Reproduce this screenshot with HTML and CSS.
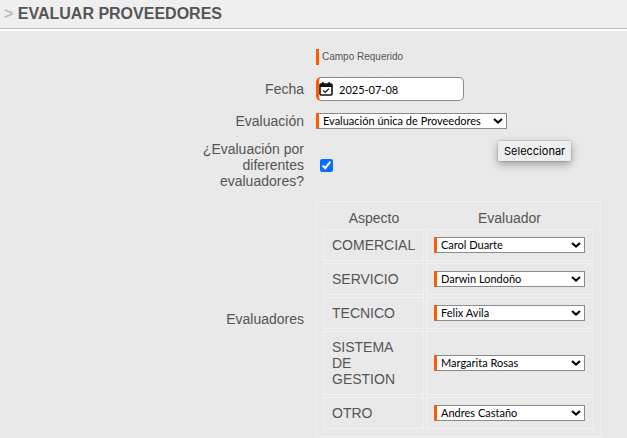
FILE: index.html
```html
<!DOCTYPE html>
<html lang="es">
<head>
  <meta charset="utf-8">
  <title>Evaluar proveedores</title>
  <link rel="stylesheet" href="styles.css">
</head>
<body>
  <header class="header">
    <h1><span class="marker">&gt;</span> EVALUAR PROVEEDORES</h1>
  </header>

  <form class="form">
    <p class="note">Campo Requerido</p>

    <label class="label" for="fecha">Fecha</label>
    <div class="date required">
      <svg class="calendar" viewBox="0 0 14 14" aria-hidden="true">
        <path d="M2 2h10a1 1 0 0 1 1 1v9a1 1 0 0 1-1 1H2a1 1 0 0 1-1-1V3a1 1 0 0 1 1-1z" fill="none" stroke="#111" stroke-width="1.6"/>
        <path d="M1 2h12v3H1zM3 0h1.6v3H3zM9.4 0H11v3H9.4z" fill="#111"/>
        <path d="M4.3 8.4l1.9 1.9 3.8-3.7" fill="none" stroke="#111" stroke-width="1.2"/>
      </svg>
      <input type="text" id="fecha" value="2025-07-08">
    </div>

    <label class="label" for="evaluacion">Evaluación</label>
    <select class="select required" id="evaluacion">
      <option>Evaluación única de Proveedores</option>
    </select>

    <label class="label" for="diferentes">¿Evaluación por diferentes evaluadores?</label>
    <div class="check">
      <input type="checkbox" id="diferentes" checked>
      <span class="tooltip" role="tooltip">Seleccionar</span>
    </div>

    <span class="label" id="evaluadores">Evaluadores</span>
    <table class="table" aria-labelledby="evaluadores">
      <thead>
        <tr>
          <th>Aspecto</th>
          <th>Evaluador</th>
        </tr>
      </thead>
      <tbody>
        <tr>
          <td class="aspect"><label for="comercial">COMERCIAL</label></td>
          <td><select class="select required" id="comercial"><option>Carol Duarte</option></select></td>
        </tr>
        <tr>
          <td class="aspect"><label for="servicio">SERVICIO</label></td>
          <td><select class="select required" id="servicio"><option>Darwin Londoño</option></select></td>
        </tr>
        <tr>
          <td class="aspect"><label for="tecnico">TECNICO</label></td>
          <td><select class="select required" id="tecnico"><option>Felix Avila</option></select></td>
        </tr>
        <tr>
          <td class="aspect"><label for="gestion">SISTEMA DE GESTION</label></td>
          <td><select class="select required" id="gestion"><option>Margarita Rosas</option></select></td>
        </tr>
        <tr>
          <td class="aspect"><label for="otro">OTRO</label></td>
          <td><select class="select required" id="otro"><option>Andres Castaño</option></select></td>
        </tr>
      </tbody>
    </table>
  </form>
</body>
</html>
```

FILE: styles.css
```css
* {
  box-sizing: border-box;
}

body {
  margin: 0;
  background-color: #e9e9e9;
  color: #555;
  font-family: "Liberation Sans", Arial, sans-serif;
  font-size: 14px;
  line-height: 16px;
}

.header {
  padding: 4px;
  background-color: #efefef;
  border-bottom: 1px solid #bbb;
  box-shadow: 0 2px 0 #fff;
}

.header h1 {
  margin: 0;
  font-size: 16px;
  line-height: 20px;
}

.marker {
  color: #bbb;
}

/* labels on the left half, fields on the right */
.form {
  display: grid;
  grid-template-columns: 1fr 1fr;
  gap: 12px;
  align-items: center;
  justify-items: start;
  padding: 20px 7px 0 0;
}

.label {
  justify-self: end;
  max-width: 112px;
  text-align: right;
}

.required {
  border: 1px solid #8a8a8a;
  border-left: 3px solid #ff5a00;
}

.note {
  grid-column: 2;
  margin: 0;
  padding-left: 3px;
  border-left: 3px solid #ff5a00;
  font-size: 10px;
}

.date {
  display: flex;
  align-items: center;
  gap: 6px;
  width: 148px;
  height: 24px;
  border-radius: 5px;
  background-color: #fff;
}

.calendar {
  width: 14px;
  height: 14px;
}

.date input {
  flex: 1;
  min-width: 0;
  padding: 0;
  border: 0;
  outline: 0;
  background: none;
  color: #000;
  font: 11px Lato, sans-serif;
}

.select {
  appearance: none;
  height: 16px;
  padding: 0 25px 0 4px;
  border-radius: 0;
  background: #fff url("data:image/svg+xml,%3Csvg xmlns='http://www.w3.org/2000/svg' viewBox='0 0 10 6'%3E%3Cpath d='M1 1l4 3.6L9 1' fill='none' stroke='%23000' stroke-width='2'/%3E%3C/svg%3E") no-repeat right 3px center / 10px 6px;
  color: #000;
  font: 11px/14px Lato, sans-serif;
}

.check {
  position: relative;
}

.check input {
  display: block;
  width: 13px;
  height: 13px;
  margin: 0 4px;
  accent-color: #0a6cff;
}

.tooltip {
  position: absolute;
  left: 182px;
  bottom: 11px;
  padding: 2px 6px;
  background-color: #eee;
  box-shadow: 0 0 1px rgba(0, 0, 0, 0.5), 0 3px 8px rgba(0, 0, 0, 0.35);
  color: #000;
  font-family: Inter, sans-serif;
  font-size: 11px;
}

.table {
  padding: 5px;
  border: 1px solid #f1f1f1;
  border-collapse: separate;
  border-spacing: 2px;
}

.table th {
  padding: 1px;
  font-weight: normal;
}

.table td {
  padding: 7px;
  border: 1px solid #f1f1f1;
}

.table .aspect {
  width: 100px;
}

.table .select {
  display: block;
  width: 151px;
}
```
